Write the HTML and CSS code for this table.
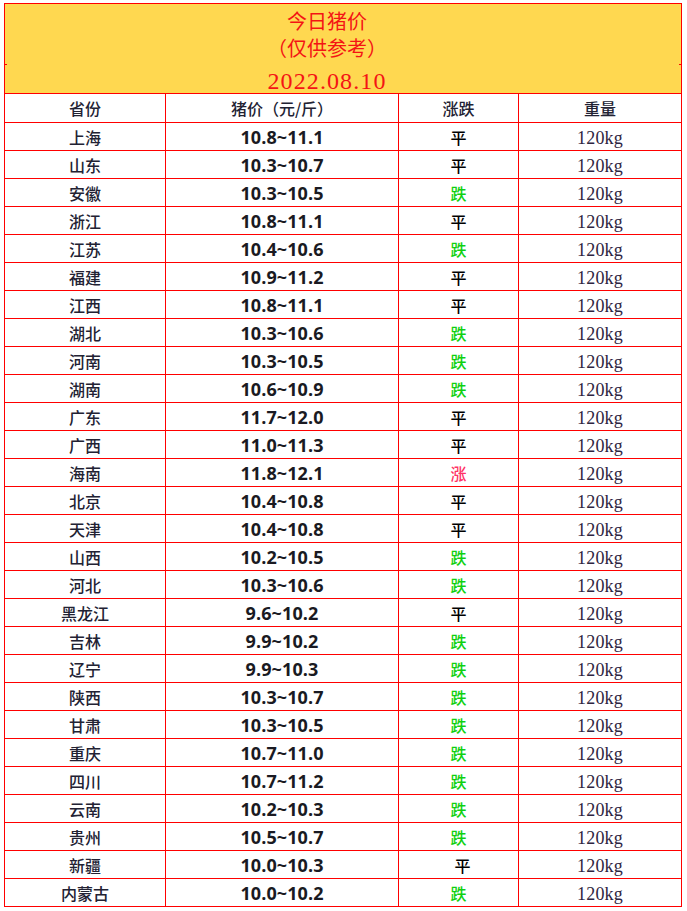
FILE: index.html
```html
<!DOCTYPE html>
<html lang="zh">
<head>
<meta charset="utf-8">
<title>今日猪价</title>
<link rel="stylesheet" href="styles.css">
</head>
<body>
<div class="wrap">
  <div class="sheet">
    <div class="title">
      <div class="t1">今日猪价</div>
      <div class="t2">（仅供参考）</div>
      <div class="date">2022.08.10</div>
    </div>
    <div class="grid">
      <div class="c h">省份</div><div class="c h">猪价（元/斤）</div><div class="c h">涨跌</div><div class="c h">重量</div>
      <div class="c p">上海</div><div class="c n">10.8~11.1</div><div class="c flat">平</div><div class="c w">120kg</div>
      <div class="c p">山东</div><div class="c n">10.3~10.7</div><div class="c flat">平</div><div class="c w">120kg</div>
      <div class="c p">安徽</div><div class="c n">10.3~10.5</div><div class="c down">跌</div><div class="c w">120kg</div>
      <div class="c p">浙江</div><div class="c n">10.8~11.1</div><div class="c flat">平</div><div class="c w">120kg</div>
      <div class="c p">江苏</div><div class="c n">10.4~10.6</div><div class="c down">跌</div><div class="c w">120kg</div>
      <div class="c p">福建</div><div class="c n">10.9~11.2</div><div class="c flat">平</div><div class="c w">120kg</div>
      <div class="c p">江西</div><div class="c n">10.8~11.1</div><div class="c flat">平</div><div class="c w">120kg</div>
      <div class="c p">湖北</div><div class="c n">10.3~10.6</div><div class="c down">跌</div><div class="c w">120kg</div>
      <div class="c p">河南</div><div class="c n">10.3~10.5</div><div class="c down">跌</div><div class="c w">120kg</div>
      <div class="c p">湖南</div><div class="c n">10.6~10.9</div><div class="c down">跌</div><div class="c w">120kg</div>
      <div class="c p">广东</div><div class="c n">11.7~12.0</div><div class="c flat">平</div><div class="c w">120kg</div>
      <div class="c p">广西</div><div class="c n">11.0~11.3</div><div class="c flat">平</div><div class="c w">120kg</div>
      <div class="c p">海南</div><div class="c n">11.8~12.1</div><div class="c up">涨</div><div class="c w">120kg</div>
      <div class="c p">北京</div><div class="c n">10.4~10.8</div><div class="c flat">平</div><div class="c w">120kg</div>
      <div class="c p">天津</div><div class="c n">10.4~10.8</div><div class="c flat">平</div><div class="c w">120kg</div>
      <div class="c p">山西</div><div class="c n">10.2~10.5</div><div class="c down">跌</div><div class="c w">120kg</div>
      <div class="c p">河北</div><div class="c n">10.3~10.6</div><div class="c down">跌</div><div class="c w">120kg</div>
      <div class="c p">黑龙江</div><div class="c n">9.6~10.2</div><div class="c flat">平</div><div class="c w">120kg</div>
      <div class="c p">吉林</div><div class="c n">9.9~10.2</div><div class="c down">跌</div><div class="c w">120kg</div>
      <div class="c p">辽宁</div><div class="c n">9.9~10.3</div><div class="c down">跌</div><div class="c w">120kg</div>
      <div class="c p">陕西</div><div class="c n">10.3~10.7</div><div class="c down">跌</div><div class="c w">120kg</div>
      <div class="c p">甘肃</div><div class="c n">10.3~10.5</div><div class="c down">跌</div><div class="c w">120kg</div>
      <div class="c p">重庆</div><div class="c n">10.7~11.0</div><div class="c down">跌</div><div class="c w">120kg</div>
      <div class="c p">四川</div><div class="c n">10.7~11.2</div><div class="c down">跌</div><div class="c w">120kg</div>
      <div class="c p">云南</div><div class="c n">10.2~10.3</div><div class="c down">跌</div><div class="c w">120kg</div>
      <div class="c p">贵州</div><div class="c n">10.5~10.7</div><div class="c down">跌</div><div class="c w">120kg</div>
      <div class="c p">新疆</div><div class="c n">10.0~10.3</div><div class="c flat shift">平</div><div class="c w">120kg</div>
      <div class="c p">内蒙古</div><div class="c n">10.0~10.2</div><div class="c down">跌</div><div class="c w">120kg</div>
    </div>
  </div>
</div>
</body>
</html>
```
FILE: styles.css
```css
html, body {
  margin: 0;
  padding: 0;
  background: #ffffff;
}
.wrap {
  padding: 3px 0 0 4px;
}
.sheet {
  width: 678px;
  box-sizing: border-box;
  border: 1px solid #ff0000;
  border-bottom: none;
}
.title {
  position: relative;
  background: #ffd850;
  border-bottom: 1px solid #ff0000;
  text-align: center;
  color: #f41414;
  font-family: "Noto Sans CJK SC", sans-serif;
  font-size: 20px;
  padding-top: 3px;
  padding-right: 32px;
  height: 86px;
}
.title::before,
.title::after {
  content: "";
  position: absolute;
  top: 60px;
  width: 2px;
  height: 1px;
  background: #ff0000;
}
.title::before {
  left: 0;
}
.title::after {
  right: 0;
}
.t1, .t2 {
  line-height: 27px;
  height: 27px;
}
.date {
  margin-top: 7px;
  line-height: 26px;
  height: 25px;
  font-family: "Liberation Serif", serif;
  font-size: 24px;
  letter-spacing: 1.1px;
}
.grid {
  display: grid;
  grid-template-columns: 161px 233px 120px 162px;
}
.c {
  height: 27px;
  border-bottom: 1px solid #ff0000;
  border-right: 1px solid #ff0000;
  display: flex;
  align-items: center;
  justify-content: center;
  font-family: "Noto Sans CJK SC", sans-serif;
  font-size: 16px;
  color: #222233;
  box-sizing: content-box;
}
.c:nth-child(4n) {
  border-right: none;
}
.h {
  height: 28px;
  font-weight: 500;
}
.p {
  font-weight: 500;
}
.n {
  font-family: "Open Sans", "Noto Sans", sans-serif;
  font-weight: 700;
  font-size: 18px;
  letter-spacing: 0.1px;
  color: #1a1a22;
}
.flat {
  color: #000000;
  font-weight: 500;
}
.down {
  color: #10d010;
  font-weight: 500;
}
.up {
  color: #ff3366;
  font-weight: 500;
}
.shift {
  padding-left: 8px;
  width: 111px;
}
.w {
  font-family: "Liberation Serif", serif;
  font-size: 18px;
  color: #2e2440;
  padding-top: 3px;
  height: 24px;
  letter-spacing: 0.2px;
}
```
